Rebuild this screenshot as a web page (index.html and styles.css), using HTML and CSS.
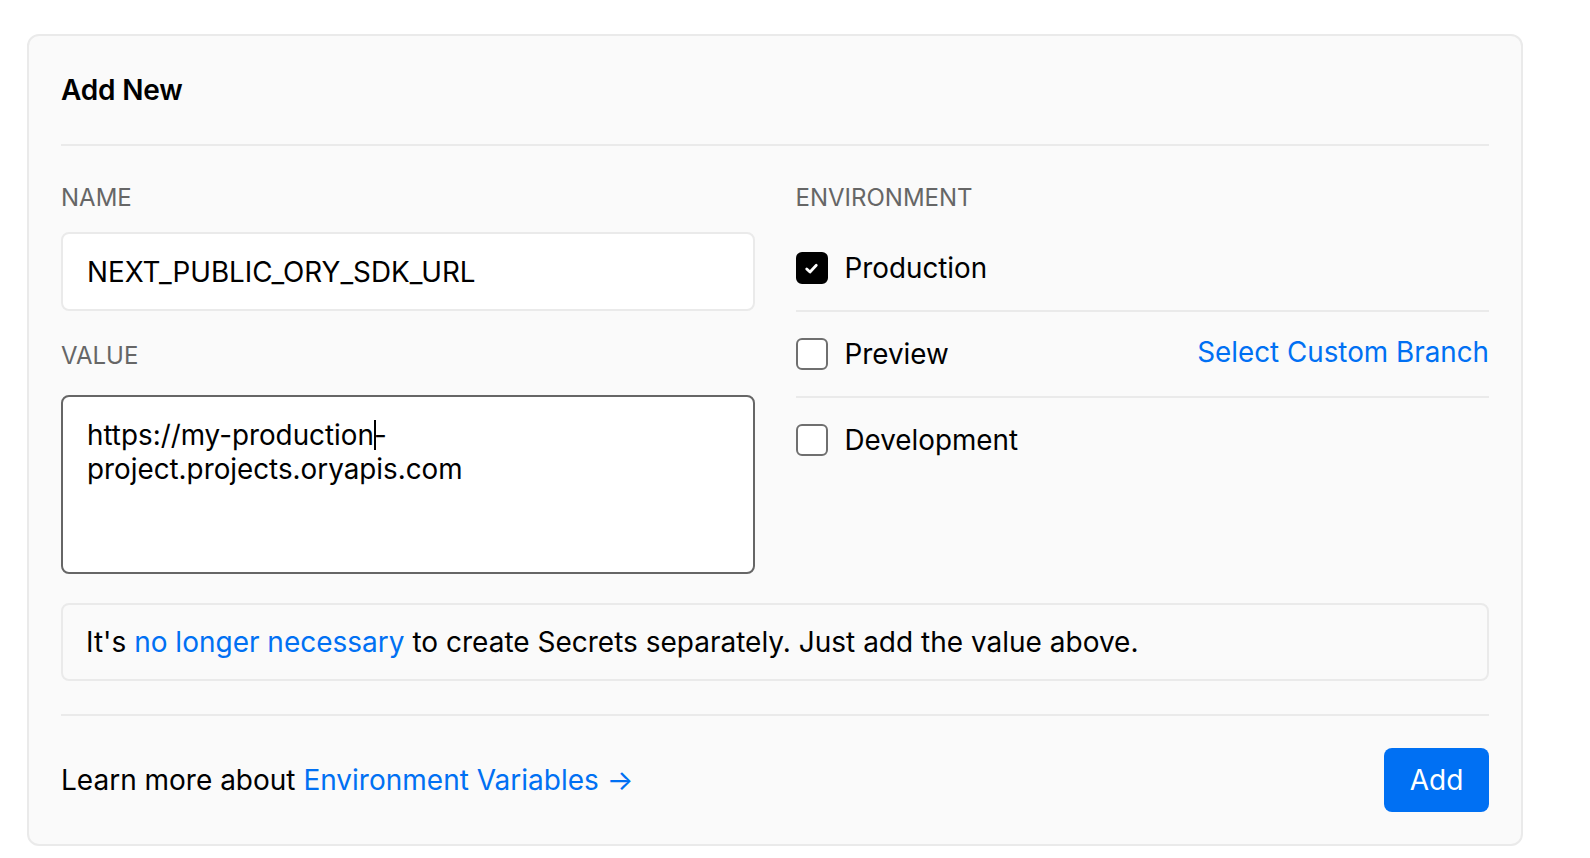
FILE: index.html
```html
<!DOCTYPE html>
<html lang="en">
<head>
<meta charset="utf-8">
<title>Add New</title>
<link rel="stylesheet" href="styles.css">
</head>
<body>
<section class="card">
  <header class="card-header">
    <h2 class="title">Add New</h2>
  </header>
  <div class="card-body">
    <div class="grid">
      <div class="col">
        <label class="label" for="name">NAME</label>
        <div class="input">NEXT_PUBLIC_ORY_SDK_URL</div>
        <label class="label label-value" for="value">VALUE</label>
        <div class="textarea">https://my-production<span class="caret"></span>-<br>project.projects.oryapis.com</div>
      </div>
      <div class="col">
        <div class="label">ENVIRONMENT</div>
        <div class="env-list">
          <div class="env-row first">
            <span class="check checked">
              <svg viewBox="0 0 16 16" width="17" height="17"><path d="M3.5 8.4 L6.6 11.3 L12.5 4.9" fill="none" stroke="#fff" stroke-width="2.6" stroke-linecap="round" stroke-linejoin="round"/></svg>
            </span>
            <span class="env-name">Production</span>
          </div>
          <div class="env-row">
            <span class="check"></span>
            <span class="env-name">Preview</span>
            <a class="link branch">Select Custom Branch</a>
          </div>
          <div class="env-row last">
            <span class="check"></span>
            <span class="env-name">Development</span>
          </div>
        </div>
      </div>
    </div>
    <div class="note">It's <a class="link">no longer necessary</a> to create Secrets separately. Just add the value above.</div>
  </div>
  <footer class="card-footer">
    <p class="learn">Learn more about <a class="link">Environment Variables →</a></p>
    <button class="btn">Add</button>
  </footer>
</section>
</body>
</html>
```

FILE: styles.css
```css
* { box-sizing: border-box; }

html, body {
  margin: 0;
  padding: 0;
  background: #ffffff;
}

body {
  font-family: Inter, "Noto Sans", "Liberation Sans", sans-serif;
  color: #000;
  font-size: 27.8px;
}

.card {
  width: 1496px;
  margin: 34px 0 0 27px;
  background: #fafafa;
  border: 2px solid #eaeaea;
  border-radius: 12px;
  padding: 0 32px;
}

.card-header {
  height: 110px;
  display: flex;
  align-items: center;
  border-bottom: 2px solid #eaeaea;
}

.title {
  margin: 0;
  font-size: 28px;
  font-weight: 600;
  letter-spacing: -0.2px;
}

.card-body {
  padding: 32px 0 33px;
  border-bottom: 2px solid #eaeaea;
}

.grid {
  display: grid;
  grid-template-columns: 1fr 1fr;
  column-gap: 41px;
}

.col {
  display: flex;
  flex-direction: column;
}

.label {
  display: block;
  font-size: 24px;
  line-height: 40px;
  color: #666;
  margin-bottom: 14px;
}

.label-value {
  margin-top: 25px;
  margin-bottom: 19px;
}

.input {
  height: 79px;
  background: #fff;
  border: 2px solid #eaeaea;
  border-radius: 8px;
  padding: 0 24px;
  display: flex;
  align-items: center;
  font-size: 27.8px;
}

.textarea {
  height: 179px;
  background: #fff;
  border: 2px solid #666;
  border-radius: 8px;
  padding: 21px 24px;
  font-size: 27.8px;
  line-height: 34px;
}

.caret {
  display: inline-block;
  width: 2px;
  height: 30px;
  background: #000;
  vertical-align: -5px;
  margin: 0 -2px 0 0;
}

.env-list {
  display: flex;
  flex-direction: column;
}

.env-row {
  display: flex;
  align-items: center;
  padding: 26px 0 26px;
  border-bottom: 2px solid #eaeaea;
}

.env-row.first { padding-top: 20px; }
.env-row.last { border-bottom: none; }

.check {
  width: 32px;
  height: 32px;
  border: 2px solid #6f6f6f;
  border-radius: 6px;
  background: #fff;
  display: flex;
  align-items: center;
  justify-content: center;
  flex: none;
}

.check.checked {
  background: #000;
  border-color: #000;
}

.env-name {
  margin-left: 17px;
  font-size: 27.8px;
  line-height: 32px;
}

.link {
  color: #0070f3;
  text-decoration: none;
  cursor: pointer;
}

.branch {
  margin-left: auto;
  font-size: 27.8px;
  line-height: 32px;
  position: relative;
  top: -2px;
}

.note {
  margin-top: 29px;
  height: 78px;
  border: 2px solid #eaeaea;
  border-radius: 8px;
  padding: 0 23px;
  display: flex;
  align-items: center;
  white-space: pre;
  font-size: 28px;
}

.card-footer {
  display: flex;
  align-items: center;
  justify-content: space-between;
  padding: 32px 0 32px;
}

.learn {
  margin: 0;
  font-size: 28px;
}

.btn {
  font-family: inherit;
  font-size: 28px;
  color: #fff;
  background: #0070f3;
  border: none;
  border-radius: 8px;
  width: 105px;
  height: 64px;
  padding: 0;
  cursor: pointer;
}
```
